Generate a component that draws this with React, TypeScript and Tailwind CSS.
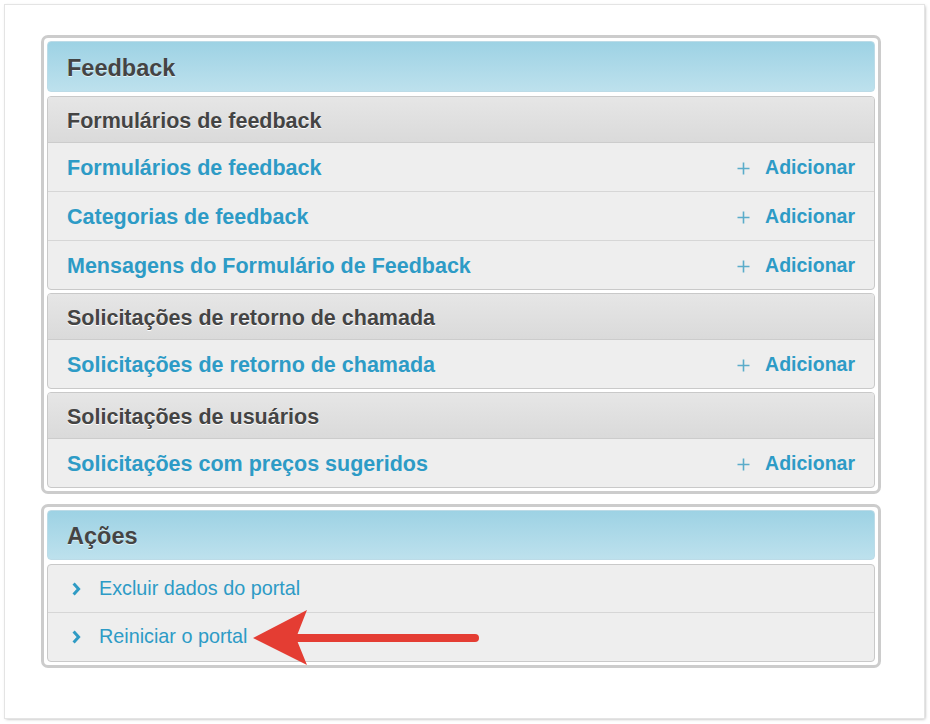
import React from "react";

interface Group {
  title: string;
  rows: string[];
}

const groups: Group[] = [
  {
    title: "Formulários de feedback",
    rows: [
      "Formulários de feedback",
      "Categorias de feedback",
      "Mensagens do Formulário de Feedback",
    ],
  },
  {
    title: "Solicitações de retorno de chamada",
    rows: ["Solicitações de retorno de chamada"],
  },
  {
    title: "Solicitações de usuários",
    rows: ["Solicitações com preços sugeridos"],
  },
];

const actions = ["Excluir dados do portal", "Reiniciar o portal"];

function PlusIcon() {
  return (
    <svg width="13" height="13" viewBox="0 0 13 13" className="shrink-0">
      <path d="M6.5 0.5v12M0.5 6.5h12" stroke="#5aacca" strokeWidth="1.6" />
    </svg>
  );
}

function Chevron() {
  return (
    <svg width="9" height="14" viewBox="0 0 9 14" className="shrink-0">
      <path
        d="M1.6 1.5l5 5.5-5 5.5"
        fill="none"
        stroke="#2f9bc4"
        strokeWidth="3"
      />
    </svg>
  );
}

function PanelHeader({ title, small }: { title: string; small?: boolean }) {
  return (
    <div
      className={
        "mb-[1px] flex items-center rounded-[4px] border border-[#bcdbe7] bg-gradient-to-b from-[#9dd2e4] to-[#bde1ed] px-[19px]" +
        (small ? " h-[50px] pt-[3px]" : " h-[51px] pt-[4px]")
      }
    >
      <h2 className="text-[23.5px] font-bold text-[#444] [text-shadow:0_1px_0_rgba(255,255,255,0.6)]">
        {title}
      </h2>
    </div>
  );
}

function GroupBox({ group }: { group: Group }) {
  return (
    <div className="overflow-hidden rounded-[4px] border border-[#c9c9c9] bg-[#eeeeee]">
      <div className="flex h-[46px] items-center border-b border-[#cccccc] bg-gradient-to-b from-[#e6e6e6] to-[#dadada] px-[19px] pt-[3px]">
        <h3 className="text-[21.5px] font-bold text-[#444] [text-shadow:0_1px_0_#fff]">
          {group.title}
        </h3>
      </div>
      {group.rows.map((row, i) => (
        <div
          key={row}
          className={
            "flex items-center justify-between px-[19px] pt-[2px]" +
            (i < group.rows.length - 1
              ? " h-[49px] border-b border-[#d6d6d6]"
              : " h-[48px]")
          }
        >
          <a className="text-[21.5px] font-bold text-[#2d9bc6]">{row}</a>
          <span className="flex items-center gap-[15px]">
            <PlusIcon />
            <span className="text-[19.5px] font-bold text-[#2d9bc6]">
              Adicionar
            </span>
          </span>
        </div>
      ))}
    </div>
  );
}

export default function App() {
  return (
    <div
      className="relative h-[724px] w-[930px] bg-white pl-[5px] pt-[5px]"
      style={{ fontFamily: '"Liberation Sans", Arial, sans-serif' }}
    >
      <div className="h-[713px] w-[919px] bg-white pl-[36px] pt-[30px] shadow-[1px_1px_3px_rgba(0,0,0,0.35)] ring-1 ring-[#e4e4e4]">
        <div className="flex w-[840px] flex-col gap-[3px] rounded-[7px] border-[3px] border-[#cccccc] bg-white p-[3px]">
          <PanelHeader title="Feedback" />
          {groups.map((g) => (
            <GroupBox key={g.title} group={g} />
          ))}
        </div>

        <div className="mt-[10px] flex w-[840px] flex-col gap-[3px] rounded-[7px] border-[3px] border-[#cccccc] bg-white p-[3px]">
          <PanelHeader title="Ações" small />
          <div className="overflow-hidden rounded-[4px] border border-[#c9c9c9] bg-[#eeeeee]">
            {actions.map((a, i) => (
              <div
                key={a}
                className={
                  "flex h-[48px] items-center gap-[18px] pl-[24px]" +
                  (i < actions.length - 1 ? " border-b border-[#d6d6d6]" : "")
                }
              >
                <Chevron />
                <a className="text-[19.8px] text-[#2d9bc6]">{a}</a>
              </div>
            ))}
          </div>
        </div>
      </div>

      {/* red annotation arrow */}
      <svg
        className="pointer-events-none absolute left-0 top-0"
        width="930"
        height="724"
        viewBox="0 0 930 724"
      >
        <line
          x1="296"
          y1="638"
          x2="475"
          y2="638"
          stroke="#e43d33"
          strokeWidth="8"
          strokeLinecap="round"
        />
        <path d="M253 638 L307 610 L296 638 L307 665 Z" fill="#e43d33" />
      </svg>
    </div>
  );
}
